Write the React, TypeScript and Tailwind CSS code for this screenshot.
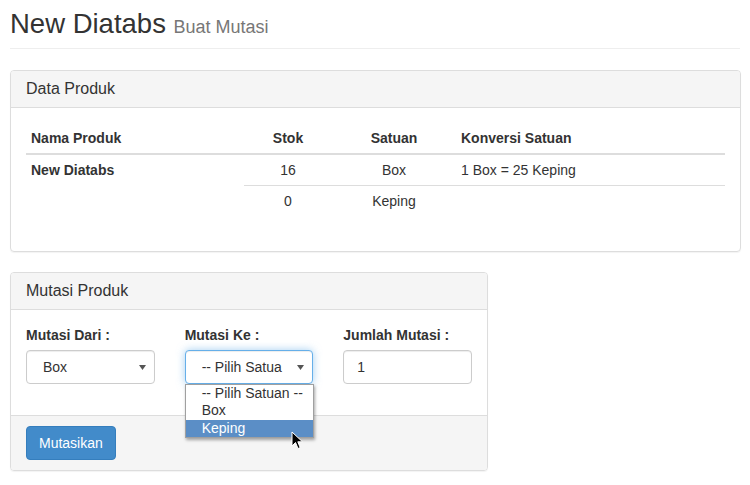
import React from "react";

function Caret() {
  return (
    <svg width="7" height="5" viewBox="0 0 7 5" className="shrink-0">
      <path d="M0 0 L7 0 L3.5 5 Z" fill="#555" />
    </svg>
  );
}

export default function App() {
  const font = { fontFamily: '"Liberation Sans", Arial, sans-serif' };
  return (
    <div
      className="w-[750px] h-[485px] bg-white text-[#333] text-[14px] leading-[20px] overflow-hidden"
      style={font}
    >
      <div className="ml-[10px] w-[731px]">
        {/* page header */}
        <div className="pt-[7px] pb-[8px] border-b border-[#eee] w-[730px]">
          <h2 className="h-[33px] text-[27.5px] leading-[33px] font-normal whitespace-nowrap">
            New Diatabs{" "}
            <small className="text-[18px] leading-none text-[#777]">Buat Mutasi</small>
          </h2>
        </div>

        {/* Data Produk */}
        <div className="mt-[21px] border border-[#ddd] rounded-[4px] shadow-[0_1px_1px_rgba(0,0,0,0.05)]">
          <div className="bg-[#f5f5f5] border-b border-[#ddd] rounded-t-[3px] px-[15px] py-[9px] h-[37px]">
            <h3 className="text-[16px] leading-[18px]">Data Produk</h3>
          </div>
          <div className="p-[15px] pb-[35px]">
            <table className="w-full border-collapse">
              <thead>
                <tr>
                  <th className="w-[218px] text-left px-[5px] py-[5px] border-b-2 border-[#ddd]">
                    Nama Produk
                  </th>
                  <th className="w-[88px] text-center px-[5px] py-[5px] border-b-2 border-[#ddd]">
                    Stok
                  </th>
                  <th className="w-[124px] text-center px-[5px] py-[5px] border-b-2 border-[#ddd]">
                    Satuan
                  </th>
                  <th className="text-left px-[5px] py-[5px] border-b-2 border-[#ddd]">
                    Konversi Satuan
                  </th>
                </tr>
              </thead>
              <tbody>
                <tr>
                  <td rowSpan={2} className="align-top font-bold px-[5px] py-[5px]">
                    New Diatabs
                  </td>
                  <td className="text-center px-[5px] py-[5px] border-b border-[#ddd]">16</td>
                  <td className="text-center px-[5px] py-[5px] border-b border-[#ddd]">Box</td>
                  <td className="px-[5px] py-[5px] border-b border-[#ddd]">1 Box = 25 Keping</td>
                </tr>
                <tr>
                  <td className="text-center px-[5px] py-[5px]">0</td>
                  <td className="text-center px-[5px] py-[5px]">Keping</td>
                  <td className="px-[5px] py-[5px]"></td>
                </tr>
              </tbody>
            </table>
          </div>
        </div>

        {/* Mutasi Produk */}
        <div className="mt-[20px] w-[478px] border border-[#ddd] rounded-[4px] shadow-[0_1px_1px_rgba(0,0,0,0.05)]">
          <div className="bg-[#f5f5f5] border-b border-[#ddd] rounded-t-[3px] px-[15px] py-[9px] h-[37px]">
            <h3 className="text-[16px] leading-[18px]">Mutasi Produk</h3>
          </div>
          <div className="px-[15px] pt-[15px] pb-[31px]">
            <div className="grid grid-cols-3 gap-x-[30px]">
              <div>
                <label className="block font-bold mb-[5px]">Mutasi Dari :</label>
                <div className="h-[34px] border border-[#ccc] rounded-[4px] bg-white flex items-center pl-[16px] pr-[8px] shadow-[inset_0_1px_1px_rgba(0,0,0,0.075)]">
                  <span className="flex-1">Box</span>
                  <Caret />
                </div>
              </div>
              <div className="relative">
                <label className="block font-bold mb-[5px]">Mutasi Ke :</label>
                <div className="h-[34px] border border-[#66afe9] rounded-[4px] bg-white flex items-center pl-[16px] pr-[8px] shadow-[inset_0_1px_1px_rgba(0,0,0,0.075),0_0_8px_rgba(102,175,233,0.6)]">
                  <span className="flex-1">
                    <span className="block w-[81px] overflow-hidden whitespace-nowrap">
                      -- Pilih Satua
                    </span>
                  </span>
                  <Caret />
                </div>
                <div className="absolute left-0 top-[59px] w-[129px] bg-white border border-[#a0a0a0] shadow-[1px_2px_3px_rgba(0,0,0,0.35)] z-10 text-[14px] leading-[17px]">
                  <div className="pl-[16px] h-[17px] whitespace-nowrap">-- Pilih Satuan --</div>
                  <div className="pl-[16px] h-[18px]">Box</div>
                  <div className="pl-[16px] h-[17px] bg-[#5b8ec6] text-white">Keping</div>
                  <svg
                    width="13"
                    height="19"
                    viewBox="0 0 13 19"
                    className="absolute left-[105px] top-[46px]"
                  >
                    <path
                      d="M1 1 L1 15 L4.5 11.5 L7 17.5 L9.2 16.6 L6.8 10.8 L11.5 10.8 Z"
                      fill="#000"
                      stroke="#fff"
                      strokeWidth="1"
                    />
                  </svg>
                </div>
              </div>
              <div>
                <label className="block font-bold mb-[5px]">Jumlah Mutasi :</label>
                <div className="h-[34px] border border-[#ccc] rounded-[4px] bg-white flex items-center px-[13px] shadow-[inset_0_1px_1px_rgba(0,0,0,0.075)]">
                  1
                </div>
              </div>
            </div>
          </div>
          <div className="bg-[#f5f5f5] border-t border-[#ddd] rounded-b-[3px] px-[15px] pt-[10px] pb-[10px]">
            <button className="h-[34px] px-[12px] bg-[#428bca] border border-[#357ebd] rounded-[4px] text-white text-[14px]">
              Mutasikan
            </button>
          </div>
        </div>
      </div>
    </div>
  );
}
